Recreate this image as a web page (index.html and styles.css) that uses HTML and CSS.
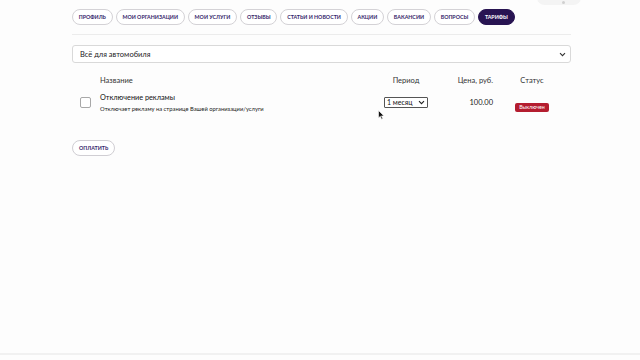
FILE: index.html
```html
<!DOCTYPE html>
<html lang="ru">
<head>
<meta charset="utf-8">
<link rel="stylesheet" href="styles.css">
</head>
<body>
<div class="topbadge"><span class="dot"></span></div>
<div class="page">
  <nav class="tabs">
    <span class="tab">Профиль</span>
    <span class="tab">Мои организации</span>
    <span class="tab">Мои услуги</span>
    <span class="tab">Отзывы</span>
    <span class="tab">Статьи и новости</span>
    <span class="tab">Акции</span>
    <span class="tab">Вакансии</span>
    <span class="tab">Вопросы</span>
    <span class="tab active">Тарифы</span>
  </nav>
  <div class="sep"></div>
  <div class="catselect">
    <span>Всё для автомобиля</span>
    <svg class="chev" width="7" height="5" viewBox="0 0 7 5"><path d="M1 1.2 L3.5 3.7 L6 1.2" fill="none" stroke="#333" stroke-width="1.1"/></svg>
  </div>
  <div class="table">
    <div class="row head">
      <div></div>
      <div class="c-name">Название</div>
      <div class="c-period">Период</div>
      <div class="c-price">Цена, руб.</div>
      <div class="c-status">Статус</div>
    </div>
    <div class="row item">
      <div class="c-check"><span class="checkbox"></span></div>
      <div class="c-name">
        <div class="title">Отключение рекламы</div>
        <div class="desc">Отключает рекламу на странице Вашей организации/услуги</div>
      </div>
      <div class="c-period">
        <span class="period">1 месяц
          <svg width="7" height="5" viewBox="0 0 7 5"><path d="M1 1.2 L3.5 3.7 L6 1.2" fill="none" stroke="#222" stroke-width="1.1"/></svg>
        </span>
        <svg class="cursor" width="7" height="10" viewBox="0 0 7 10"><path d="M0.5 0.5 L0.5 8 L2.3 6.3 L3.6 9.3 L4.8 8.8 L3.5 5.9 L6 5.9 Z" fill="#111" stroke="#fff" stroke-width="0.6"/></svg>
      </div>
      <div class="c-price">100.00</div>
      <div class="c-status"><span class="badge">Выключен</span></div>
    </div>
  </div>
  <button class="pay">Оплатить</button>
</div>
<div class="bottomline"></div>
</body>
</html>
```
FILE: styles.css
```css
html, body {
  margin: 0;
  padding: 0;
  background: #fdfdfd;
  font-family: Lato, "Noto Sans", sans-serif;
  color: #222;
}
body {
  width: 640px;
  height: 360px;
  position: relative;
  overflow: hidden;
}
.topbadge {
  position: absolute;
  left: 537px;
  top: -10px;
  width: 44px;
  height: 15px;
  border-radius: 8px;
  background: #f4f4f4;
  display: flex;
  justify-content: center;
  align-items: flex-end;
  padding-bottom: 1px;
  box-sizing: border-box;
}
.dot {
  width: 3px;
  height: 3px;
  border-radius: 50%;
  background: #d0d0d0;
  margin-left: 8px;
}
.page {
  padding: 9px 0 0 72px;
  width: 499px;
}
.tabs {
  display: flex;
  gap: 3px;
  white-space: nowrap;
}
.tab {
  flex-shrink: 0;
  height: 14px;
  display: inline-flex;
  align-items: center;
  padding: 0 5.8px;
  border: 1px solid #d4d2d6;
  border-radius: 9px;
  text-transform: uppercase;
  font-size: 5.3px;
  font-weight: 700;
  color: #35266a;
  background: #fff;
}
.tab.active {
  background: #281452;
  border-color: #281452;
  color: #fff;
}
.sep {
  height: 1px;
  background: #ececec;
  margin-top: 9px;
}
.catselect {
  margin-top: 10px;
  height: 16px;
  border: 1px solid #d9d9d9;
  border-radius: 3px;
  background: #fff;
  display: flex;
  align-items: center;
  justify-content: space-between;
  padding: 0 4px 0 7px;
  font-size: 7.5px;
  color: #222;
}
.table {
  margin-top: 11px;
}
.row {
  display: grid;
  grid-template-columns: 28px 270px 72px 51px 78px;
  align-items: center;
}
.head {
  font-size: 7.5px;
  color: #333;
  height: 12px;
}
.c-period, .c-status { text-align: center; }
.c-price { text-align: right; }
.item {
  margin-top: 6px;
  height: 20px;
}
.c-check {
  display: flex;
  padding-left: 8px;
}
.checkbox {
  width: 9px;
  height: 9px;
  border: 1px solid #a8a8a8;
  border-radius: 2px;
  background: #fff;
}
.title {
  font-size: 7.3px;
  color: #111;
  line-height: 10px;
}
.desc {
  font-size: 5.8px;
  color: #222;
  margin-top: 2px;
  line-height: 7px;
}
.c-period {
  position: relative;
  display: flex;
  justify-content: center;
}
.period {
  height: 9px;
  border: 1px solid #555;
  border-radius: 1px;
  background: #fff;
  font-size: 7px;
  line-height: 9px;
  display: flex;
  align-items: center;
  justify-content: space-between;
  padding: 0 2px;
  box-sizing: content-box;
  width: 38px;
  color: #111;
}
.cursor {
  position: absolute;
  left: 8px;
  top: 13px;
}
.item .c-price {
  font-size: 7.5px;
  color: #222;
}
.badge {
  display: inline-block;
  background: #b41d2f;
  color: #fff;
  font-size: 5.3px;
  padding: 0 4px;
  height: 9px;
  line-height: 9px;
  border-radius: 2px;
}
.pay {
  display: block;
  margin-top: 28px;
  height: 16px;
  padding: 0 6px;
  border: 1px solid #d0ced3;
  border-radius: 9px;
  background: #fff;
  font-family: Lato, sans-serif;
  font-size: 5.3px;
  font-weight: 700;
  text-transform: uppercase;
  color: #35266a;
}
.bottomline {
  position: absolute;
  left: 0;
  right: 0;
  top: 353px;
  height: 2px;
  background: #f1f1f1;
}
```
